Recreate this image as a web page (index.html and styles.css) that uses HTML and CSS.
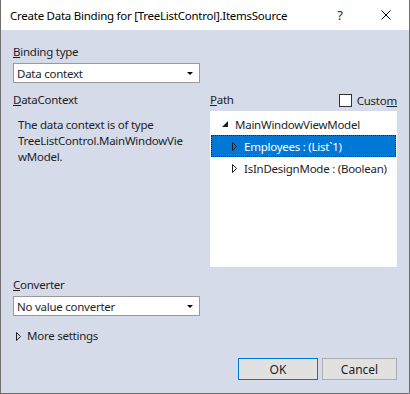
FILE: index.html
```html
<!DOCTYPE html>
<html lang="en">
<head>
  <meta charset="UTF-8" />
  <title>Create Data Binding</title>
  <link rel="stylesheet" href="styles.css">
</head>
<body>
  <div class="window">
    <!-- Заголовок окна -->
    <div class="titlebar">
      <span class="title">Create Data Binding for [TreeListControl].ItemsSource</span>
      <span class="title-btn help">?</span>
      <span class="title-btn close">
        <svg viewBox="0 0 10 10" width="10" height="10">
          <path d="M0.5 0.5 L9.5 9.5 M9.5 0.5 L0.5 9.5" stroke="#000" stroke-width="1" fill="none"/>
        </svg>
      </span>
    </div>

    <div class="dialog">
      <div class="label"><u>B</u>inding type</div>
      <div class="combo">
        <span>Data context</span>
        <span class="combo-arrow"></span>
      </div>

      <div class="columns">
        <div class="col-left">
          <div class="label"><u>D</u>ataContext</div>
          <p class="description">The data context is of type<br>TreeListControl.MainWindowVie<br>wModel.</p>
        </div>
        <div class="col-right">
          <div class="path-header">
            <span class="label"><u>P</u>ath</span>
            <label class="check">
              <span class="check-box"></span>
              <span>Custo<u>m</u></span>
            </label>
          </div>
          <ul class="tree">
            <li class="tree-row root">
              <svg class="glyph" viewBox="0 0 6 6" width="6" height="6"><path d="M6 0 L6 6 L0 6 Z" fill="#1e1e1e"/></svg>
              <span>MainWindowViewModel</span>
            </li>
            <li class="tree-row child selected">
              <svg class="glyph" viewBox="0 0 5 9" width="5" height="9"><path d="M0.5 0.5 L4.5 4.5 L0.5 8.5 Z" fill="none" stroke="#1e1e1e" stroke-width="1"/></svg>
              <span>Employees : (List`1)</span>
            </li>
            <li class="tree-row child">
              <svg class="glyph" viewBox="0 0 5 9" width="5" height="9"><path d="M0.5 0.5 L4.5 4.5 L0.5 8.5 Z" fill="none" stroke="#1e1e1e" stroke-width="1"/></svg>
              <span>IsInDesignMode : (Boolean)</span>
            </li>
          </ul>
        </div>
      </div>

      <div class="label converter-label"><u>C</u>onverter</div>
      <div class="combo">
        <span>No value converter</span>
        <span class="combo-arrow"></span>
      </div>

      <div class="more">
        <svg class="glyph" viewBox="0 0 5 9" width="5" height="9"><path d="M0.5 0.5 L4.5 4.5 L0.5 8.5 Z" fill="none" stroke="#1e1e1e" stroke-width="1"/></svg>
        <span>More settings</span>
      </div>

      <div class="buttons">
        <button class="btn default">OK</button>
        <button class="btn">Cancel</button>
      </div>
    </div>
  </div>
</body>
</html>
```

FILE: styles.css
```css
:root {
  --bg-color: #d6dbe9;
  --text-color: #1e1e1e;
  --accent: #0078d7;
}
* { box-sizing: border-box; }
body {
  margin: 0;
  font-family: 'Noto Sans', sans-serif;
  font-size: 11.5px;
  letter-spacing: -0.25px;
  color: var(--text-color);
}
.window {
  width: 410px;
  height: 394px;
  border: 1px solid #6f6f6f;
  border-top: none;
  background: var(--bg-color);
  display: flex;
  flex-direction: column;
}
.titlebar {
  height: 30px;
  background: #fff;
  display: flex;
  align-items: center;
  padding-left: 9px;
}
.title {
  flex: 1;
  color: #000;
}
.title-btn {
  width: 46px;
  text-align: center;
  display: flex;
  justify-content: center;
  align-items: center;
}
.help { font-size: 13px; }
.dialog {
  flex: 1;
  padding: 14px 12px 0 12px;
  display: flex;
  flex-direction: column;
}
.label {
  line-height: 16px;
}
.converter-label { margin-top: 10px; }
.combo {
  width: 187px;
  height: 20px;
  margin-top: 3px;
  background: #fff;
  border: 1px solid #999;
  display: flex;
  align-items: center;
  justify-content: space-between;
  padding: 0 6px 0 3px;
}
.combo-arrow {
  width: 0;
  height: 0;
  border-left: 3px solid transparent;
  border-right: 3px solid transparent;
  border-top: 3px solid #000;
}
/* Две колонки */
.columns {
  display: flex;
  margin-top: 9px;
}
.col-left {
  width: 197px;
}
.col-right {
  width: 187px;
}
.description {
  margin: 9px 0 0 5px;
  line-height: 16px;
}
.path-header {
  display: flex;
  justify-content: space-between;
  align-items: center;
  height: 16px;
}
.check {
  display: flex;
  align-items: center;
  gap: 5px;
}
.check-box {
  width: 13px;
  height: 13px;
  background: #fff;
  border: 1px solid #333;
}
.tree {
  list-style: none;
  margin: 3px 0 0 0;
  padding: 2px 1px 0 1px;
  height: 156px;
  background: #fff;
}
.tree-row {
  height: 22px;
  display: flex;
  align-items: center;
  white-space: nowrap;
}
.tree-row.root { padding-left: 11px; }
.tree-row.root .glyph { margin-right: 7px; }
.tree-row.child { padding-left: 21px; }
.tree-row.child .glyph { margin-right: 7px; }
.tree-row.selected {
  background: var(--accent);
  color: #fff;
  outline: 1px dotted #1a2a3a;
  outline-offset: -1px;
}
.more {
  margin-top: 12px;
  line-height: 16px;
  display: flex;
  align-items: center;
  gap: 6px;
  padding-left: 3px;
}
.buttons {
  margin-top: 14px;
  display: flex;
  justify-content: flex-end;
  gap: 4px;
}
.btn {
  height: 22px;
  width: 75px;
  font-family: inherit;
  font-size: 12px;
  color: var(--text-color);
  background: #e1e1e1;
  border: 1px solid #adadad;
  padding: 0;
}
.btn.default {
  width: 80px;
  border-color: var(--accent);
}
```
